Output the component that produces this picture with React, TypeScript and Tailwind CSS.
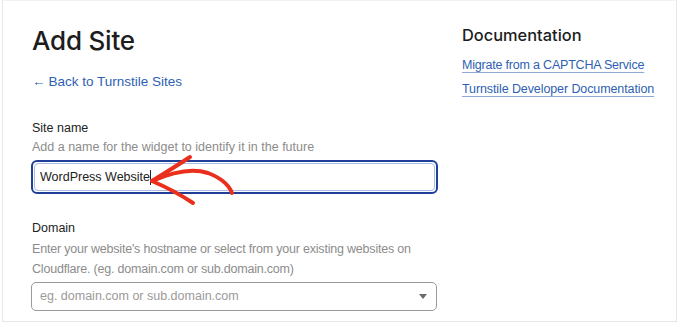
export default function App() {
  return (
    <div className="w-[680px] h-[324px] bg-white font-['Liberation_Sans',sans-serif] text-[#1d1d1d] overflow-hidden">
      <div className="relative ml-[2px] w-[675px] h-[322px] border border-[#e6e6e6] border-t-[#f2f2f2] flex">
        {/* left column */}
        <div className="w-[432px] pl-[29px] pt-[24px] flex flex-col">
          <h1 className="font-['Inter',sans-serif] text-[26px] leading-[32px] font-medium tracking-[-0.2px]">Add Site</h1>
          <a className="mt-[16px] text-[13.5px] leading-[18px] text-[#2f5fb3] flex items-center gap-[3px]">
            <span>←</span>
            <span>Back to Turnstile Sites</span>
          </a>

          <div className="mt-[29px] text-[12.5px] leading-[16px] font-medium text-[#222]">Site name</div>
          <div className="mt-[3px] text-[12.5px] leading-[16px] text-[#8c8c8c]">Add a name for the widget to identify it in the future</div>
          <div className="mt-[5px] -ml-[1px] w-[407px] h-[34px] shrink-0 rounded-[6px] border-2 border-[#1f3f98] p-[1px]">
            <div className="h-full rounded-[4px] border border-[#a9bde6] flex items-center pl-[5px] text-[12.5px] text-[#222]">
              WordPress Website<span className="inline-block w-px h-[15px] bg-[#222]" />
            </div>
          </div>

          <div className="mt-[26px] text-[12.5px] leading-[16px] font-medium text-[#222]">Domain</div>
          <div className="mt-[3px] text-[12.5px] leading-[20px] tracking-[-0.2px] text-[#8c8c8c] w-[410px]">
            Enter your website's hostname or select from your existing websites on Cloudflare. (eg. domain.com or sub.domain.com)
          </div>
          <div className="mt-[3px] -ml-[1px] w-[406px] h-[29px] shrink-0 rounded-[5px] border border-[#9a9a9a] flex items-center justify-between pl-[8px] pr-[9px] text-[12.5px] text-[#9a9a9a]">
            <span>eg. domain.com or sub.domain.com</span>
            <svg width="8" height="5" viewBox="0 0 8 5"><path d="M0 0h8L4 5z" fill="#6b6b6b" /></svg>
          </div>
        </div>

        {/* right column */}
        <div className="pl-[27px] pt-[23px] flex flex-col">
          <h2 className="font-['Inter',sans-serif] text-[16.4px] leading-[22px] font-medium">Documentation</h2>
          <a className="mt-[11px] text-[12.5px] leading-[16px] tracking-[-0.2px] text-[#2f5fb3] underline decoration-[#8fa8d8] underline-offset-[3px] whitespace-nowrap">Migrate from a CAPTCHA Service</a>
          <a className="mt-[8px] text-[12.5px] leading-[16px] tracking-[-0.1px] text-[#2f5fb3] underline decoration-[#8fa8d8] underline-offset-[3px] whitespace-nowrap">Turnstile Developer Documentation</a>
        </div>

        {/* red annotation arrow */}
        <svg className="absolute -left-[3px] -top-[1px] pointer-events-none" width="680" height="324" viewBox="0 0 680 324">
          <g fill="none" stroke="#ea2f1c" strokeWidth="4" strokeLinecap="round" strokeLinejoin="round">
            <path d="M152 181 C170 173 190 167 208 173 C221 178 229 185 232 193" />
            <path d="M152 181 C165 173 178 165 190 157" />
            <path d="M152 181 C166 187 181 195 193 203" />
          </g>
        </svg>
      </div>
    </div>
  );
}
